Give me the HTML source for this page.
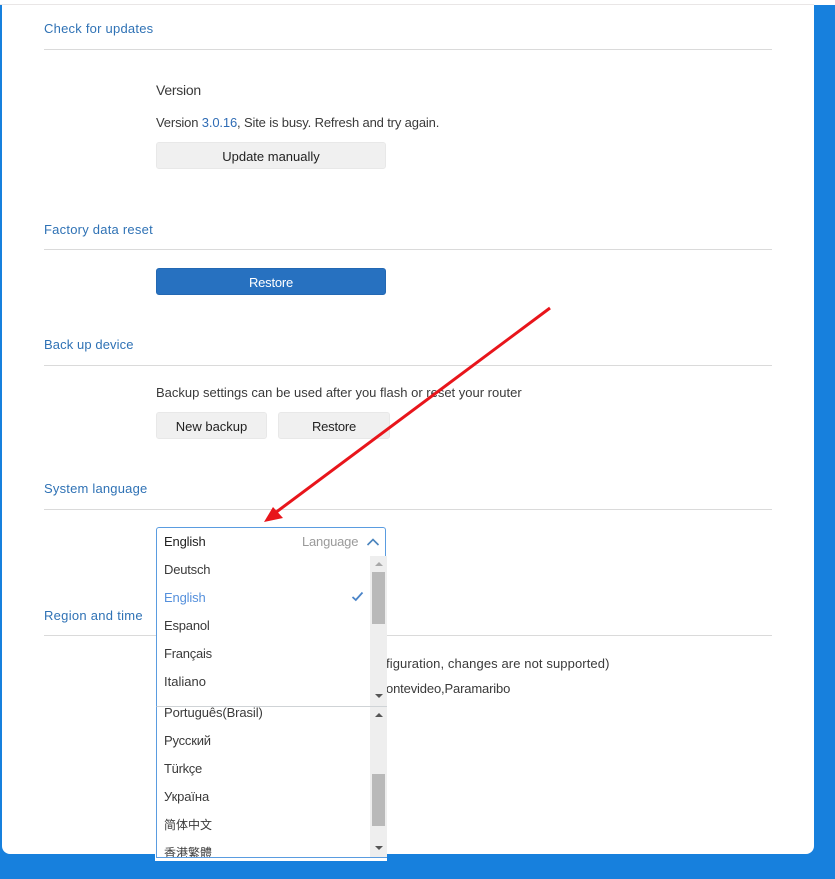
<!DOCTYPE html>
<html><head><meta charset="utf-8"><style>
html,body{margin:0;padding:0}
body{position:relative;width:835px;height:879px;overflow:hidden;background:#1780dd;font-family:"Liberation Sans","Noto Sans CJK SC",sans-serif;font-size:13px;color:#3a3a3a}
div{position:absolute;box-sizing:border-box}
.t{white-space:nowrap;line-height:20px;height:20px}
.h{left:44px;color:#2f72b5;letter-spacing:.23px}
.l{left:44px;width:728px;height:1px;background:#dadada}
.b{background:#f0f0f0;border:1px solid #e8e8e8;border-radius:3px;text-align:center;color:#222;line-height:27px;height:27px}
.sb{background:#eeeeee;width:17px;left:370px}
.th{background:#b9b9b9;width:13px;left:372px}
.up{width:0;height:0;border-left:4px solid transparent;border-right:4px solid transparent;border-bottom:4px solid #555;left:375px}
.dn{width:0;height:0;border-left:4px solid transparent;border-right:4px solid transparent;border-top:4px solid #555;left:375px}
.i{left:164px}
</style></head><body>
<div style="left:0;top:0;width:835px;height:5px;background:#fff"></div>
<div style="left:0;top:4px;width:814px;height:1px;background:#e9e6e6"></div>
<div style="left:2px;top:5px;width:812px;height:849px;background:#fff;border-radius:0 0 8px 8px"></div>

<div class="t h" style="top:19px">Check for updates</div>
<div class="l" style="top:49px"></div>
<div class="t" style="left:156px;top:80px;font-size:14px;letter-spacing:-.25px">Version</div>
<div class="t" style="left:156px;top:113px;letter-spacing:-.15px">Version <span style="color:#2f6cb5">3.0.16</span>, Site is busy. Refresh and try again.</div>
<div class="b" style="left:156px;top:142px;width:230px">Update manually</div>

<div class="t h" style="top:220px">Factory data reset</div>
<div class="l" style="top:249px"></div>
<div style="left:156px;top:268px;width:230px;height:27px;background:#2771c0;border:1px solid #2368b3;border-radius:3px;color:#fff;text-align:center;line-height:27px;letter-spacing:-.2px">Restore</div>

<div class="t h" style="top:335px;letter-spacing:.1px">Back up device</div>
<div class="l" style="top:365px"></div>
<div class="t" style="left:156px;top:383px">Backup settings can be used after you flash or reset your router</div>
<div class="b" style="left:156px;top:412px;width:111px">New backup</div>
<div class="b" style="left:278px;top:412px;width:112px;letter-spacing:-.2px">Restore</div>

<div class="t h" style="top:479px;letter-spacing:.2px">System language</div>
<div class="l" style="top:509px"></div>

<div class="t h" style="top:606px;letter-spacing:.28px">Region and time</div>
<div class="l" style="top:635px"></div>
<div class="t" style="left:386px;top:654px;letter-spacing:.1px">figuration, changes are not supported)</div>
<div class="t" style="left:386px;top:679px;letter-spacing:-.15px">ontevideo,Paramaribo</div>

<!-- select -->
<div style="left:156px;top:527px;width:230px;height:30px;background:#fff;border:1px solid #5a9ce0;border-bottom:1px solid #dcdcdc;border-radius:3px 3px 0 0"></div>
<div class="t" style="left:164px;top:532px;color:#222;letter-spacing:-.15px">English</div>
<div class="t" style="left:302px;top:532px;color:#9a9a9a;letter-spacing:-.2px">Language</div>
<svg style="position:absolute;left:366px;top:537px" width="14" height="10"><path d="M1.5 8 L7 2.5 L12.5 8" fill="none" stroke="#4a84bd" stroke-width="1.6"/></svg>

<!-- list 1 -->
<div style="left:156px;top:556px;width:231px;height:151px;background:#fff;border-left:1px solid #5a9ce0;border-bottom:1px solid #cfd3d6"></div>
<div class="t i" style="top:560px;letter-spacing:-.2px">Deutsch</div>
<div class="t i" style="top:588px;color:#5590dc;letter-spacing:-.15px">English</div>
<svg style="position:absolute;left:351px;top:591px" width="13" height="11"><path d="M1.5 6 L4.8 9 L11.5 1.5" fill="none" stroke="#4a84c8" stroke-width="1.8"/></svg>
<div class="t i" style="top:616px;letter-spacing:-.2px">Espanol</div>
<div class="t i" style="top:644px;letter-spacing:-.25px">Français</div>
<div class="t i" style="top:672px">Italiano</div>
<div class="sb" style="top:556px;height:150px"></div>
<div class="up" style="top:562px;border-bottom-color:#a8a8a8"></div>
<div class="th" style="top:572px;height:52px"></div>
<div class="dn" style="top:694px"></div>

<!-- list 2 -->
<div style="left:155px;top:707px;width:232px;height:154px;background:#fff"></div>
<div style="left:156px;top:707px;width:214px;height:150px;overflow:hidden;background:#fff;border-left:1px solid #5a9ce0">
  <div class="t" style="left:7px;top:-4px;letter-spacing:-.1px">Português(Brasil)</div>
  <div class="t" style="left:7px;top:24px;letter-spacing:-.2px">Русский</div>
  <div class="t" style="left:7px;top:52px;letter-spacing:-.3px">Türkçe</div>
  <div class="t" style="left:7px;top:80px;letter-spacing:-.1px">Україна</div>
  <div class="t" style="left:7px;top:108px;font-size:12px">简体中文</div>
  <div class="t" style="left:7px;top:136px;font-size:12px">香港繁體</div>
</div>
<div class="sb" style="top:707px;height:150px"></div>
<div class="up" style="top:713px"></div>
<div class="th" style="top:774px;height:52px"></div>
<div class="dn" style="top:846px"></div>
<div style="left:156px;top:857px;width:231px;height:1px;background:#5a9ce0"></div>

<!-- arrow -->
<svg style="position:absolute;left:0;top:0" width="835" height="879">
<path d="M550 308 L275 513" fill="none" stroke="#e8151b" stroke-width="3"/>
<path d="M264 522 L273 507 L283 518 Z" fill="#e8151b"/>
</svg>
</body></html>
